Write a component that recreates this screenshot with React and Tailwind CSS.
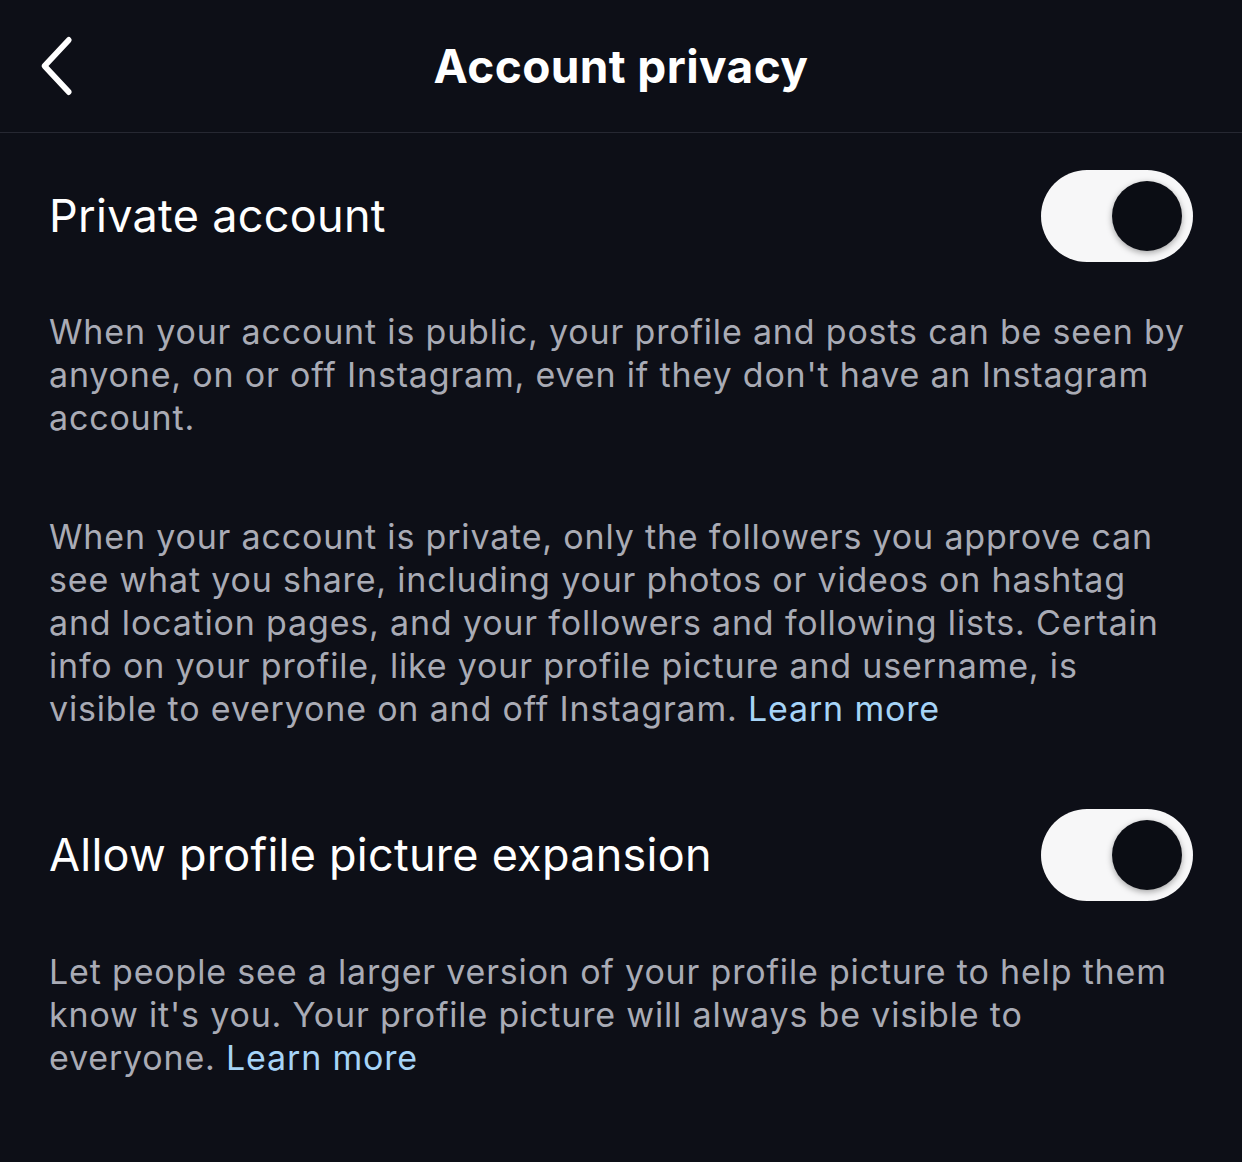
import React, { useState } from 'react';

const Toggle = ({ on, onChange }) => (
    <button
        onClick={onChange}
        className={`relative w-[152px] h-[92px] rounded-full shrink-0 transition-colors ${on ? 'bg-[#f7f7f8]' : 'bg-[#3a3c45]'}`}
    >
        <span
            className={`absolute top-[11px] w-[70px] h-[70px] rounded-full bg-[#0b0d14] shadow-[0_2px_6px_rgba(0,0,0,0.35)] transition-all ${on ? 'left-[71px]' : 'left-[11px]'}`}
        />
    </button>
);

const App = () => {
    const [isPrivate, setIsPrivate] = useState(true);
    const [expansion, setExpansion] = useState(true);

    const body = 'text-[34px] leading-[43px] tracking-[0.82px] text-[#a9abb5] whitespace-nowrap';

    return (
        <div className="min-h-[1162px] w-full bg-[#0d0f17] text-white" style={{ fontFamily: 'Inter, "Noto Sans", sans-serif' }}>
            {/* Header */}
            <div className="relative h-[133px] flex items-center justify-center border-b border-[#262832]">
                <button className="absolute left-[38px] top-[36px] w-[40px] h-[60px]">
                    <svg width="40" height="60" viewBox="0 0 40 60" fill="none">
                        <path d="M32 4 L5 30 L32 56" stroke="white" strokeWidth="6" strokeLinecap="round" strokeLinejoin="round" transform="translate(2,0) scale(0.9,1)" />
                    </svg>
                </button>
                <h1 className="text-[46px] font-bold tracking-[0.4px] leading-none">Account privacy</h1>
            </div>

            <div className="pl-[49px] pr-[49px]">
                {/* Private account */}
                <div className="flex items-center justify-between pt-[37px]">
                    <span className="text-[45px] leading-[92px] tracking-[0.3px]">Private account</span>
                    <Toggle on={isPrivate} onChange={() => setIsPrivate(!isPrivate)} />
                </div>

                <p className={`mt-[48px] ${body}`}>
                    When your account is public, your profile and posts can be seen by<br />
                    anyone, on or off Instagram, even if they don't have an Instagram<br />
                    account.
                </p>

                <p className={`mt-[76px] ${body}`}>
                    When your account is private, only the followers you approve can<br />
                    see what you share, including your photos or videos on hashtag<br />
                    and location pages, and your followers and following lists. Certain<br />
                    info on your profile, like your profile picture and username, is<br />
                    visible to everyone on and off Instagram. <span className="text-[#a6d4f7]">Learn more</span>
                </p>

                {/* Profile picture expansion */}
                <div className="flex items-center justify-between mt-[79px]">
                    <span className="text-[45px] leading-[92px] tracking-[0.25px]">Allow profile picture expansion</span>
                    <Toggle on={expansion} onChange={() => setExpansion(!expansion)} />
                </div>

                <p className={`mt-[49px] ${body}`}>
                    Let people see a larger version of your profile picture to help them<br />
                    know it's you. Your profile picture will always be visible to<br />
                    everyone. <span className="text-[#a6d4f7]">Learn more</span>
                </p>
            </div>
        </div>
    );
};

export default App;
